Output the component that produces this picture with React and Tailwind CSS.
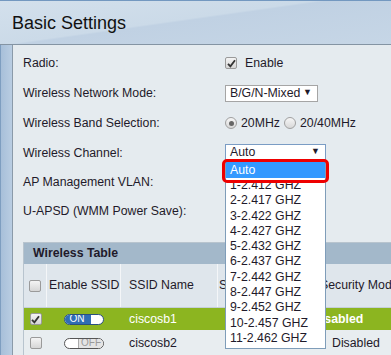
import React from "react";

const Check = ({ checked }) => (
  <span className="w-[12px] h-[12px] rounded-[2px] border border-[#9a9a9a] bg-[linear-gradient(#f4f4f4,#d6d6d6)] flex items-center justify-center shrink-0">
    {checked && (
      <svg width="9" height="9" viewBox="0 0 9 9">
        <path d="M1 4.8 L3.4 7.4 L8 1.2" fill="none" stroke="#333" strokeWidth="1.8" />
      </svg>
    )}
  </span>
);

const Radio = ({ checked }) => (
  <span className="w-[12px] h-[12px] rounded-full border border-[#a0a0a0] bg-[linear-gradient(#f6f6f6,#d8d8d8)] flex items-center justify-center shrink-0">
    {checked && <span className="w-[5px] h-[5px] rounded-full bg-[#666]" />}
  </span>
);

const Toggle = ({ on }) =>
  on ? (
    <span className="w-[40px] h-[11px] rounded-full border border-[#2a4f80] bg-white flex overflow-hidden">
      <span className="w-[26px] h-full bg-[#2f6db5] text-white text-[10px] leading-[10px] flex items-center justify-center pr-[2px]">
        ON
      </span>
    </span>
  ) : (
    <span className="w-[40px] h-[11px] rounded-full border border-[#555] bg-white flex overflow-hidden justify-end">
      <span className="w-[25px] h-full bg-[#e4e4e4] border-l border-[#aaa] text-[#9a9a9a] text-[10px] leading-[10px] flex items-center justify-center">
        OFF
      </span>
    </span>
  );

const Row = ({ label, h, children }) => (
  <div className={`flex items-center ${h}`}>
    <div className="w-[202px] shrink-0">{label}</div>
    <div className="flex items-center">{children}</div>
  </div>
);

const channels = [
  "1-2.412 GHZ",
  "2-2.417 GHZ",
  "3-2.422 GHZ",
  "4-2.427 GHZ",
  "5-2.432 GHZ",
  "6-2.437 GHZ",
  "7-2.442 GHZ",
  "8-2.447 GHZ",
  "9-2.452 GHZ",
  "10-2.457 GHZ",
  "11-2.462 GHZ",
];

export default function App() {
  return (
    <div className="w-[391px] h-[355px] overflow-hidden relative bg-[#e5ebef] text-[12.3px] whitespace-nowrap text-[#1f1a2a] font-['Liberation_Sans',Arial,sans-serif]">
      {/* title bar */}
      <div className="h-[45px] border-t border-[#7398c0] border-b border-b-[#8494a3] bg-[linear-gradient(172deg,#d3e0ec_0%,#cbdae8_45%,#c0d1e3_47%,#c6d6e6_100%)] flex items-center pl-[12px]">
        <span className="text-[18px] text-[#111] pt-[1px]">Basic Settings</span>
      </div>

      <div className="flex h-[310px]">
        <div className="w-[13px] shrink-0 border-l border-[#7e9ec0] border-r border-r-[#8a9aa9] bg-[linear-gradient(90deg,#a7bfd9,#b9cde2)]" />
        <div className="flex-1 pl-[10px] pt-[3px]">
          <Row label="Radio:" h="h-[30px]">
            <Check checked />
            <span className="ml-[8px]">Enable</span>
          </Row>
          <Row label="Wireless Network Mode:" h="h-[30px]">
            <div className="w-[93px] h-[17px] bg-white border border-[#a5a5a5] flex items-center justify-between pl-[4px] pr-[5px]">
              <span>B/G/N-Mixed</span>
              <span className="text-[9px]">▼</span>
            </div>
          </Row>
          <Row label="Wireless Band Selection:" h="h-[30px]">
            <Radio checked />
            <span className="ml-[4px]">20MHz</span>
            <span className="ml-[4px]">
              <Radio />
            </span>
            <span className="ml-[4px]">20/40MHz</span>
          </Row>
          <Row label="Wireless Channel:" h="h-[30px]" />
          <Row label="AP Management VLAN:" h="h-[29px]" />
          <Row label="U-APSD (WMM Power Save):" h="h-[29px]" />

          {/* table */}
          <div className="mt-[16px] w-[420px] border-l border-t border-[#b8c4ce]">
            <div className="h-[21px] bg-[#a3b8ca] flex items-center pl-[9px] font-bold">
              Wireless Table
            </div>
            <div className="flex h-[44px] bg-[#dfe6ec] border-b border-[#c5cfd8]">
              <div className="w-[23px] border-r border-[#f4f6f8] flex items-center justify-center">
                <Check />
              </div>
              <div className="w-[74px] border-r border-[#f4f6f8] flex items-center pl-[2px]">Enable SSID</div>
              <div className="w-[97px] border-r border-[#f4f6f8] flex items-center pl-[8px]">SSID Name</div>
              <div className="w-[99px] border-r border-[#f4f6f8] flex items-center pl-[1px]">SSID Broadcast</div>
              <div className="flex-1 flex items-center pl-[3px]">Security Mode</div>
            </div>
            <div className="flex h-[22px] bg-[#8cb520] text-white">
              <div className="w-[23px] flex items-center justify-center">
                <Check checked />
              </div>
              <div className="w-[74px] flex items-center pl-[17px]">
                <Toggle on />
              </div>
              <div className="w-[97px] flex items-center pl-[8px]">ciscosb1</div>
              <div className="w-[99px]" />
              <div className="flex-1 flex items-center pl-[3px]">
                <span className="ml-[-8px] font-bold">Disabled</span>
              </div>
            </div>
            <div className="flex h-[26px] bg-[#e8edf0]">
              <div className="w-[23px] flex items-center justify-center">
                <Check />
              </div>
              <div className="w-[74px] flex items-center pl-[17px]">
                <Toggle />
              </div>
              <div className="w-[97px] flex items-center pl-[8px]">ciscosb2</div>
              <div className="w-[99px]" />
              <div className="flex-1 flex items-center pl-[15px]">Disabled</div>
            </div>
          </div>
        </div>
      </div>

      {/* open channel dropdown */}
      <div className="absolute left-[225px] top-[144px] w-[101px]">
        <div className="h-[16px] bg-white border border-[#7a9cc4] flex items-center justify-between pl-[4px] pr-[5px]">
          <span>Auto</span>
          <span className="text-[9px]">▼</span>
        </div>
        <div className="bg-white border border-[#7f9db9] border-t-0 pt-[2px] pb-[2px] leading-[15.3px]">
          <div className="bg-[#3399ff] text-white pl-[4px] h-[16px] leading-[16px]">Auto</div>
          {channels.map((c) => (
            <div key={c} className="pl-[4px]">
              {c}
            </div>
          ))}
        </div>
        <div className="absolute left-[-3px] top-[15px] w-[107px] h-[24px] border-[3px] border-[#ee0000] rounded-[5px]" />
      </div>
    </div>
  );
}
